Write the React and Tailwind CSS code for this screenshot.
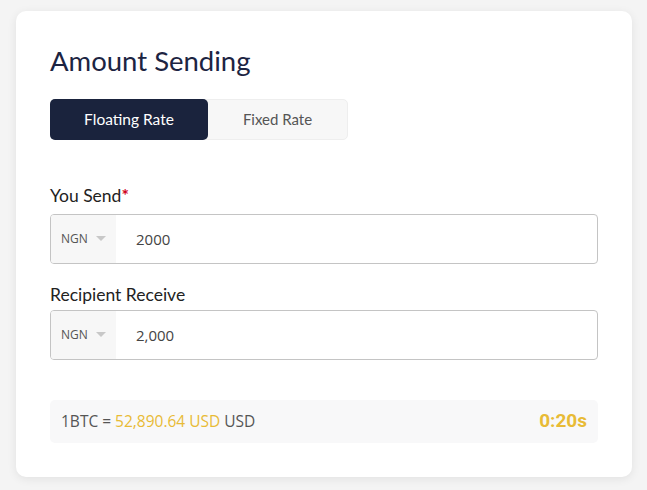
export default function App() {
  const lato = { fontFamily: 'Lato, "Noto Sans", sans-serif' };
  const sans = { fontFamily: '"Open Sans", Roboto, sans-serif' };
  const Caret = () => (
    <svg width="10" height="6" viewBox="0 0 10 6" className="ml-[8px]">
      <path d="M0 0 L10 0 L5 5 Z" fill="#c8c8c8" />
    </svg>
  );
  const Field = ({ value }) => (
    <div className="flex h-[50px] w-full rounded-[4px] border border-[#c4c4c4] overflow-hidden">
      <div className="flex items-center w-[65px] bg-[#f7f7f7] pl-[10px] text-[12px] text-[#555]" style={sans}>
        NGN
        <Caret />
      </div>
      <div className="flex items-center pl-[20px] text-[15px] text-[#444]" style={sans}>
        {value}
      </div>
    </div>
  );
  return (
    <div className="w-[647px] h-[490px] bg-[#f4f4f4] pl-[16px] pt-[11px] overflow-hidden">
      <div className="w-[616px] h-[466px] bg-white rounded-[10px] shadow-[0_2px_10px_rgba(0,0,0,0.08)] px-[34px] pt-[34px]" style={lato}>
        <h1 className="text-[27.5px] leading-[32px] text-[#1c2442] font-normal">Amount Sending</h1>
        <div className="mt-[22px] flex w-[298px] h-[41px] rounded-[5px] bg-[#f7f7f7] border border-[#eeeeee]">
          <div className="w-[158px] -m-px h-[41px] rounded-[5px] bg-[#1a233d] text-white text-[15.5px] flex items-center justify-center font-normal">Floating Rate</div>
          <div className="flex-1 flex items-center justify-center text-[15px] text-[#555] ml-px">Fixed Rate</div>
        </div>
        <div className="mt-[46px] text-[17.5px] leading-[20px] text-[#222] font-normal">
          You Send<span className="text-[#d0021b] font-bold">*</span>
        </div>
        <div className="mt-[8px]"><Field value="2000" /></div>
        <div className="mt-[21px] text-[17.5px] leading-[20px] text-[#222] font-normal">Recipient Receive</div>
        <div className="mt-[5px]"><Field value="2,000" /></div>
        <div className="mt-[40px] h-[43px] rounded-[5px] bg-[#f8f8f9] flex items-center justify-between pl-[11px] pr-[11px]">
          <div className="text-[15.5px] text-[#555]" style={sans}>
            1BTC = <span className="text-[#e8bb36]">52,890.64 USD</span> USD
          </div>
          <div className="text-[19px] font-bold text-[#e8bb36]" style={{ fontFamily: 'Roboto, Arial, sans-serif' }}>0:20s</div>
        </div>
      </div>
    </div>
  );
}
